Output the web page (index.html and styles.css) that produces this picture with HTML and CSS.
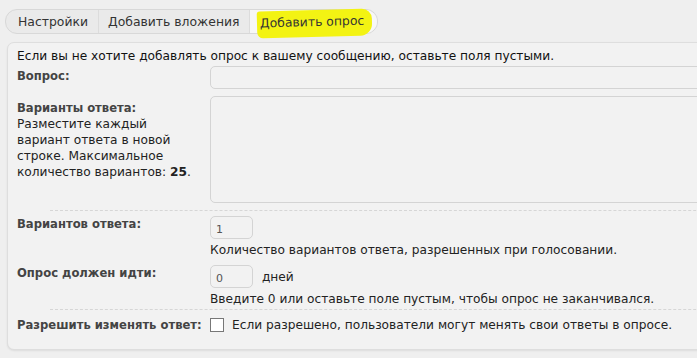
FILE: index.html
```html
<!DOCTYPE html>
<html>
<head>
    <title>Добавить опрос</title>
    <link rel="stylesheet" href="styles.css">
</head>
<body>
    <ul class="tabs">
        <li class="tab">Настройки</li>
        <li class="tab">Добавить вложения</li>
        <li class="tab tab-active"><span class="marker">Добавить опрос</span></li>
    </ul>

    <div class="panel">
        <p class="intro">Если вы не хотите добавлять опрос к вашему сообщению, оставьте поля пустыми.</p>

        <div class="row row-question">
            <div class="label"><b>Вопрос:</b></div>
            <div class="field"><input type="text" class="input-wide"></div>
        </div>

        <div class="row row-options">
            <div class="label">
                <b>Варианты ответа:</b><br>
                <span class="desc">Разместите каждый вариант ответа в новой строке. Максимальное количество вариантов: <strong>25</strong>.</span>
            </div>
            <div class="field"><textarea class="input-area"></textarea></div>
        </div>

        <div class="sep"></div>

        <div class="row">
            <div class="label"><b>Вариантов ответа:</b></div>
            <div class="field">
                <input type="text" class="input-small" value="1">
                <div class="hint">Количество вариантов ответа, разрешенных при голосовании.</div>
            </div>
        </div>

        <div class="row">
            <div class="label"><b>Опрос должен идти:</b></div>
            <div class="field">
                <input type="text" class="input-small" value="0"> <span class="unit">дней</span>
                <div class="hint">Введите 0 или оставьте поле пустым, чтобы опрос не заканчивался.</div>
            </div>
        </div>

        <div class="sep sep-last"></div>

        <div class="row row-check">
            <div class="label"><b>Разрешить изменять ответ:</b></div>
            <div class="field">
                <label class="check"><span class="box"></span>Если разрешено, пользователи могут менять свои ответы в опросе.</label>
            </div>
        </div>
    </div>
</body>
</html>
```

FILE: styles.css
```css
html, body {
    margin: 0;
    padding: 0;
    overflow: hidden;
}

body {
    background: #efefef;
    font-family: "DejaVu Sans", Verdana, sans-serif;
    font-size: 12.2px;
    color: #222;
    width: 697px;
    height: 358px;
}

.tabs {
    display: flex;
    list-style: none;
    margin: 9px 0 0 5px;
    padding: 0;
    width: fit-content;
    height: 23px;
    border: 1px solid #d8d8d8;
    border-radius: 12px;
    background: #eaeaea;
}

.tab {
    padding: 0 9px 0 9px;
    line-height: 23px;
    color: #333;
    border-left: 1px solid #dcdcdc;
    font-size: 12.4px;
}

.tab:first-child {
    border-left: none;
    padding-left: 12px;
    padding-right: 10px;
}

.tab-active {
    background: #f7f7f7;
    border-radius: 0 12px 12px 0;
    padding-left: 10px;
    padding-right: 13px;
}

.marker {
    display: inline-block;
    background: #f3f313;
    margin: 0 -8px 0 -3px;
    padding: 2px 8px 5px 3px;
    line-height: 20px;
    border-radius: 3px 10px 12px 6px;
    transform: rotate(-1.5deg);
}

.panel {
    margin: 8px 0 0 7px;
    width: 760px;
    height: 308px;
    background: #f2f2f2;
    border: 1px solid #dedede;
    border-radius: 7px;
    box-shadow: 0 1px 2px rgba(0,0,0,0.08);
    padding: 5px 0 0 9px;
    box-sizing: border-box;
}

.intro {
    margin: 0;
    line-height: 16px;
    color: #111;
}

.row {
    display: grid;
    grid-template-columns: 193px 1fr;
    line-height: 16px;
}

.label {
    color: #222;
    padding-top: 0;
}

.label b {
    color: #444;
    font-size: 11.6px;
}

.desc {
    display: block;
    max-width: 184px;
}

.row-question {
    margin-top: 2px;
}

.row-question .label {
    padding-top: 2px;
}

.row.row-options {
    margin-top: 19px;
}

.row-options .label {
    padding-top: 4px;
}

input, textarea {
    font-family: "DejaVu Sans", Verdana, sans-serif;
    font-size: 11px;
    color: #555;
    background: #f2f2f2;
    border: 1px solid #d4d4d4;
    border-radius: 5px;
    box-sizing: border-box;
    margin: 0;
    outline: none;
}

.input-wide {
    width: 520px;
    height: 23px;
}

.input-area {
    width: 520px;
    height: 107px;
    resize: none;
    display: block;
}

.input-small {
    width: 43px;
    height: 23px;
    padding: 3px 5px 0 5px;
    vertical-align: middle;
}

.sep {
    border-top: 1px dashed #d6d6d6;
    margin: 7px 0 0 33px;
}

.sep-last {
    margin-top: 2px;
}

.row + .row {
    margin-top: 7px;
}

.sep + .row {
    margin-top: 5px;
}

.sep + .row-check {
    margin-top: 7px;
}

.unit {
    margin-left: 5px;
    vertical-align: middle;
}

.hint {
    margin-top: 3px;
}

.check {
    display: flex;
    align-items: center;
    gap: 8px;
    line-height: 16px;
}

.box {
    width: 12px;
    height: 12px;
    border: 1px solid #777;
    background: #fff;
}
```
